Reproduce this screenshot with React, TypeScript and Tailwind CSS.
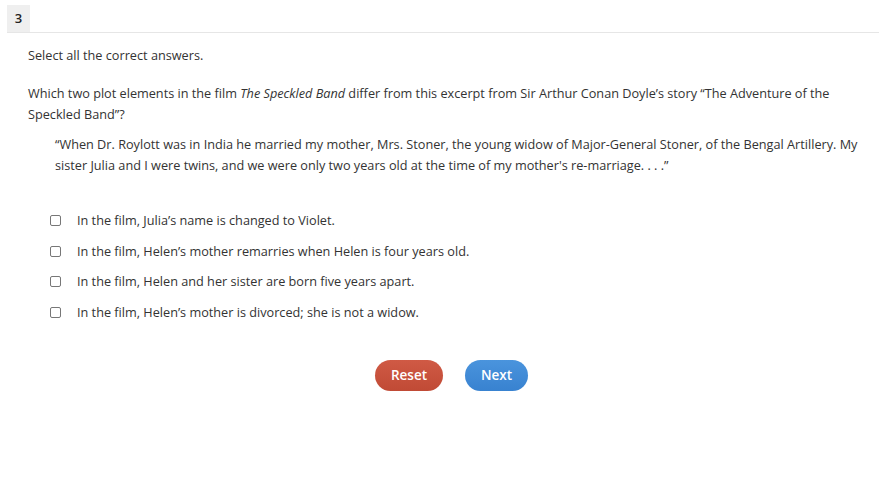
export default function App() {
  const options = [
    'In the film, Julia’s name is changed to Violet.',
    'In the film, Helen’s mother remarries when Helen is four years old.',
    'In the film, Helen and her sister are born five years apart.',
    'In the film, Helen’s mother is divorced; she is not a widow.',
  ];

  return (
    <div className="min-h-[493px] bg-white text-[#333] text-[12.7px] leading-[21px]" style={{ fontFamily: '"Open Sans", sans-serif' }}>
      <div className="ml-[7px] border-b border-[#e6e6e6] h-[33px] flex items-start pt-[5px]">
        <div className="bg-[#efefef] w-[23px] h-[27px] flex items-center justify-center font-semibold text-[13px] text-[#222]">3</div>
      </div>

      <div className="pl-[28px] pr-[18px]">
        <p className="mt-[12px]">Select all the correct answers.</p>

        <p className="mt-[17px] pr-[8px]">
          Which two plot elements in the film <i>The Speckled Band</i> differ from this excerpt from Sir Arthur Conan Doyle’s story “The Adventure of the Speckled Band”?
        </p>

        <p className="mt-[9px] pl-[27px]">
          “When Dr. Roylott was in India he married my mother, Mrs. Stoner, the young widow of Major-General Stoner, of the Bengal Artillery. My sister Julia and I were twins, and we were only two years old at the time of my mother's re-marriage. . . .”
        </p>

        <div className="mt-[34px] flex flex-col gap-[9.5px] pl-[22px]">
          {options.map((o) => (
            <label key={o} className="flex items-center gap-[16px]">
              <span className="w-[11px] h-[11px] border border-[#777] rounded-[2px] bg-white shrink-0" />
              <span>{o}</span>
            </label>
          ))}
        </div>

        <div className="mt-[37px] flex justify-center gap-[22px] pl-[14px]">
          <button className="w-[68px] h-[31px] rounded-full bg-gradient-to-b from-[#d05a45] to-[#c04a35] text-white text-[13.5px] font-semibold">
            Reset
          </button>
          <button className="w-[63px] h-[31px] rounded-full bg-gradient-to-b from-[#4a94dd] to-[#3882d0] text-white text-[13.5px] font-semibold">
            Next
          </button>
        </div>
      </div>
    </div>
  );
}
